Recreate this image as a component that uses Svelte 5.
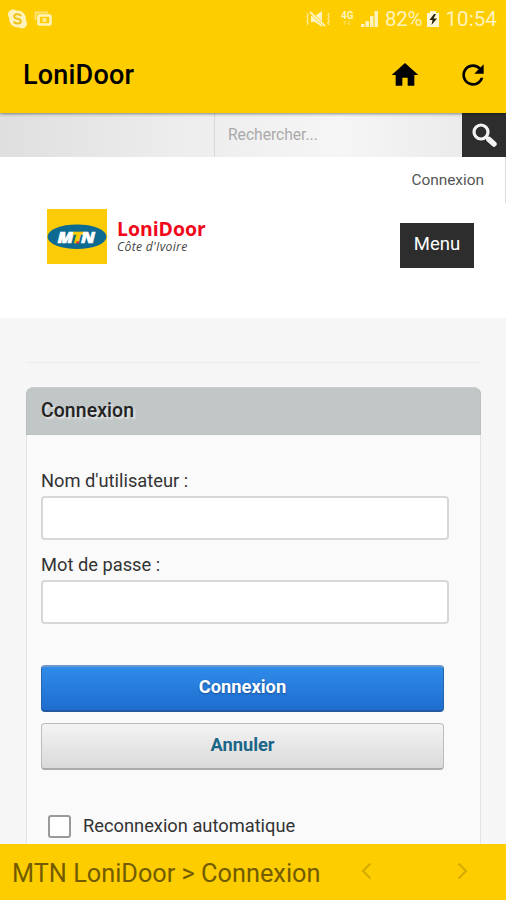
<script>
    let search = '';
    let remember = false;
    const fields = [
        {id:'username', type:'text', label:"Nom d'utilisateur :"},
        {id:'password', type:'password', label:'Mot de passe :'}
    ];
</script>
<style>
    :global(body) {
        margin: 0;
        overflow: hidden;
    }
    .screen {
        display: flex;
        flex-direction: column;
        width: 506px;
        height: 900px;
        overflow: hidden;
        font-family: Roboto, sans-serif;
        background: #f6f6f6;
        color: #333;
    }
    .screen *, .screen {
        box-sizing: border-box;
    }
    svg {
        display: block;
        flex: none;
    }
    button {
        font-family: inherit;
        padding: 0;
        border: 0;
        background: none;
    }

    .top {
        flex: none;
        height: 113px;
        background: #fecd00;
        box-shadow: 0 1px 3px rgba(0,0,0,.45);
        z-index: 1;
    }
    .status {
        display: flex;
        align-items: center;
        height: 37px;
        padding: 0 9px 0 7px;
        color: #fff3bd;
        font-size: 20px;
    }
    .status .copy {
        margin-left: 6px;
    }
    .status .right {
        display: flex;
        align-items: center;
        margin-left: auto;
    }
    .network {
        margin-left: 9px;
    }
    .signal {
        margin-left: 5px;
    }
    .battery {
        margin-left: 5px;
    }
    .percent {
        margin-left: 6px;
        font-size: 20.5px;
        letter-spacing: -.2px;
    }
    .clock {
        margin-left: 6px;
        font-size: 20.5px;
        letter-spacing: .1px;
    }
    .appbar {
        display: flex;
        align-items: center;
        height: 76px;
        padding: 0 17px 0 23px;
        color: #000;
    }
    .appbar h1 {
        margin: 0 auto 0 0;
        font-size: 27px;
        font-weight: 500;
        letter-spacing: .2px;
    }
    .appbar button + button {
        margin-left: 36px;
    }

    .search {
        display: flex;
        flex: none;
        height: 44px;
        background: linear-gradient(90deg, #dfdfdf, #ededed 35%, #f4f4f4 65%, #e8e8e8);
    }
    .search input {
        width: 248px;
        margin-left: auto;
        padding: 0 0 0 13px;
        border: 0;
        border-left: 1px solid #d8d8d8;
        outline: 0;
        background: linear-gradient(90deg, #eee, #f6f6f6 50%, #ebebeb);
        font: 15.6px Roboto, sans-serif;
    }
    .search input::placeholder {
        color: #aaa;
        opacity: 1;
    }
    .search button {
        display: flex;
        align-items: center;
        justify-content: center;
        width: 44px;
        background: #2d2d2d;
    }

    .account {
        flex: none;
        display: flex;
        justify-content: flex-end;
        height: 46px;
        padding: 13px 21px 0 0;
        border-right: 1px solid #ddd;
        background: #fff;
        font-size: 15.4px;
        line-height: 20px;
        color: #555;
    }
    .brand {
        flex: none;
        display: flex;
        align-items: flex-start;
        height: 115px;
        padding: 6px 32px 0 47px;
        background: #fff;
    }
    .name {
        margin: 9px 0 0 10px;
        font-family: "Open Sans", "Noto Sans", sans-serif;
    }
    .name strong {
        display: block;
        font-size: 19.4px;
        line-height: 21px;
        color: #f0081a;
    }
    .name em {
        display: block;
        font-size: 12.2px;
        line-height: 16px;
        letter-spacing: .3px;
        color: #444;
    }
    .menu {
        width: 74px;
        height: 45px;
        margin: 14px 0 0 auto;
        padding-bottom: 4px;
        background: #2d2d2d;
        color: #fff;
        font-size: 18.5px;
    }

    main {
        flex: 1;
        min-height: 0;
        overflow: hidden;
        padding: 44px 25px 0 26px;
    }
    hr {
        height: 1px;
        margin: 0 0 24px;
        border: 0;
        background: #ebebeb;
    }
    .panel {
        height: 520px;
        border: 1px solid #e2e3e3;
        border-radius: 8px;
        background: #fafafa;
    }
    .panel h2 {
        height: 48px;
        margin: -1px -1px 0;
        padding-left: 14px;
        border: 1px solid #bbc0bf;
        border-top-color: #c9cccc;
        border-radius: 7px 7px 0 0;
        background: #c1c6c6;
        color: #222;
        font-size: 19.4px;
        font-weight: 500;
        letter-spacing: .1px;
        line-height: 45px;
        text-shadow: 2px 2px 2px #e8e8e8;
    }
    form {
        padding: 33px 31px 0 14px;
    }
    label {
        display: block;
        margin-bottom: 2px;
        font-size: 18.3px;
        line-height: 26px;
    }
    .field {
        width: 408px;
        height: 44px;
        margin-bottom: 12px;
        padding: 0 10px;
        display: block;
        border: 2px solid #d7d7d7;
        border-radius: 4px;
        background: #fff;
        outline: 0;
        font-size: 18px;
    }
    .actions {
        display: flex;
        flex-direction: column;
        gap: 11px;
        width: 403px;
        margin-top: 41px;
    }
    .actions button {
        height: 47px;
        padding-bottom: 4px;
        border: 1px solid #bcbcbc;
        border-bottom: 2px solid #aaa;
        border-radius: 4px;
        background: linear-gradient(#f3f3f3, #dadada);
        color: #1b6688;
        font-size: 18.3px;
        font-weight: 700;
    }
    .actions .primary {
        border-color: #2567ae;
        border-top: 2px solid #6d98c9;
        border-bottom-color: #2259a0;
        background: linear-gradient(#308be9, #1e6dce);
        color: #fff;
        text-shadow: 0 1px 2px #174f94;
    }
    .remember {
        display: flex;
        align-items: center;
        margin: 43px 0 0 7px;
    }
    .remember input {
        appearance: none;
        width: 23px;
        height: 23px;
        margin: 0 12px 0 0;
        border: 2px solid #9a9a9a;
        border-radius: 3px;
        background: #fff;
    }

    footer {
        flex: none;
        display: flex;
        align-items: center;
        height: 56px;
        padding: 3px 38px 0 12px;
        background: #fecd00;
        color: #735c00;
        font-size: 25.3px;
        white-space: nowrap;
    }
    footer span {
        margin-right: auto;
    }
    footer button {
        margin-top: -6px;
    }
    footer button + button {
        margin-left: 85px;
    }
</style>

<div class="screen">
    <div class="top">
        <div class="status">
            <svg width="21" height="20" viewBox="0 0 21 20" fill="#fff3bd">
                <circle cx="10.500" cy="10" r="8.400" />
                <circle cx="6" cy="5.500" r="5" />
                <circle cx="15" cy="14.500" r="5" />
                <path d="M14 7C13 4.700 7.200 4.500 7.200 7.400c0 3.200 6.700 1.600 6.700 4.800 0 3-5.900 2.900-7.100.3" fill="none" stroke="#f0c218" stroke-width="2" />
            </svg>
            <svg class="copy" width="18" height="15" viewBox="0 0 18 15" fill="none">
                <path d="M1.500 9V1.500H14" stroke="#ffe47a" stroke-width="1.800" />
                <rect x="4.500" y="4.500" width="12" height="9" rx="1" stroke="#fff3bd" stroke-width="2.600" />
                <rect x="8.500" y="7" width="4" height="4" fill="#ffe88e" />
            </svg>
            <div class="right">
                <svg width="26" height="18" viewBox="0 0 26 18" fill="#fff3bd">
                    <path d="M6 6h4l7-5v16l-7-5H6z" />
                    <path d="M5 2l15 14" stroke="#fecd00" stroke-width="3" />
                    <path d="M5 2l15 14" stroke="#fff3bd" stroke-width="1.800" />
                    <path d="M2 3l1 2-1 2 1 2-1 2 1 2-1 2M24 3l-1 2 1 2-1 2 1 2-1 2 1 2" fill="none" stroke="#ffe88e" stroke-width="1.400" />
                </svg>
                <svg class="network" width="15" height="18" viewBox="0 0 15 18" fill="#fff3bd">
                    <text x="1" y="9" font-size="10" font-weight="700">4G</text>
                    <path d="M5 11v4M3.500 13L5 11l1.500 2M9 15v-4M7.500 13L9 15l1.500-2" fill="none" stroke="#ffe06a" stroke-width=".8" />
                </svg>
                <svg class="signal" width="19" height="18" viewBox="0 0 19 18" fill="#fff3bd">
                    <path d="M1 17v-3h3.500v3zM5.500 17v-6H9v6zM10 17V6h3.500v11zM14.500 17V1H18v16z" />
                </svg>
                <span class="percent">82%</span>
                <svg class="battery" width="12" height="18" viewBox="0 0 12 18">
                    <path d="M0 3h3V1h6v2h3v14H0z" fill="#fff7d5" />
                    <path d="M7 4L2.500 10h3L4.500 15 10 8.500H6.500L9 4z" fill="#2b220b" />
                </svg>
                <span class="clock">10:54</span>
            </div>
        </div>
        <div class="appbar">
            <h1>LoniDoor</h1>
            <button aria-label="Accueil">
                <svg width="32" height="32" viewBox="0 0 24 24"><path d="M10 20v-6h4v6h5v-8h3L12 3 2 12h3v8z" /></svg>
            </button>
            <button aria-label="Actualiser">
                <svg width="32" height="32" viewBox="0 0 24 24"><path d="M17.650 6.350C16.200 4.900 14.210 4 12 4c-4.420 0-7.990 3.580-7.990 8s3.570 8 7.990 8c3.730 0 6.840-2.550 7.730-6h-2.080c-.82 2.330-3.040 4-5.650 4-3.310 0-6-2.690-6-6s2.690-6 6-6c1.660 0 3.140.69 4.220 1.780L13 11h7V4z" /></svg>
            </button>
        </div>
    </div>

    <div class="search">
        <input type="text" placeholder="Rechercher..." bind:value={search} />
        <button aria-label="Rechercher">
            <svg width="28" height="26" viewBox="0 0 28 26" fill="none" stroke="#f3f3f3">
                <circle cx="11" cy="10" r="7" stroke-width="3.200" />
                <path d="M16 15l3 2.500" stroke-width="3" />
                <path d="M19 17.500l5 4.500" stroke-width="5.500" stroke-linecap="round" />
            </svg>
        </button>
    </div>
    <div class="account">Connexion</div>
    <div class="brand">
        <svg width="60" height="55" viewBox="0 0 60 55">
            <rect width="60" height="55" fill="#fbcb08" />
            <ellipse cx="30" cy="27.700" rx="29.500" ry="12.300" fill="#0d6a91" />
            <g font-family="Open Sans, sans-serif" font-size="16" font-weight="800" font-style="italic" fill="#fff" stroke="#fff" stroke-width=".6">
                <text x="10.500" y="33.500" textLength="16" lengthAdjust="spacingAndGlyphs">M</text>
                <text x="25" y="33.500" textLength="11" lengthAdjust="spacingAndGlyphs" fill="#fbcb08" stroke="#fbcb08">T</text>
                <text x="34" y="33.500" textLength="14" lengthAdjust="spacingAndGlyphs">N</text>
            </g>
            <path d="M28.500 32.500h4l-2 2.800z" fill="#d7261e" />
        </svg>
        <div class="name">
            <strong>LoniDoor</strong>
            <em>Côte d'Ivoire</em>
        </div>
        <button class="menu">Menu</button>
    </div>

    <main>
        <hr />
        <div class="panel">
            <h2>Connexion</h2>
            <form>
                {#each fields as field}
                <label for={field.id}>{field.label}</label>
                <input class="field" id={field.id} type={field.type} />
                {/each}
                <div class="actions">
                    <button type="button" class="primary">Connexion</button>
                    <button type="button">Annuler</button>
                </div>
                <label class="remember">
                    <input type="checkbox" bind:checked={remember} />
                    Reconnexion automatique
                </label>
            </form>
        </div>
    </main>

    <footer>
        <span>MTN LoniDoor &gt; Connexion</span>
        <button aria-label="Page précédente">
            <svg width="11" height="18" viewBox="0 0 11 18" fill="none" stroke="#d6ac00" stroke-width="2.200"><path d="M9.500 1.500L2 9l7.500 7.500" /></svg>
        </button>
        <button aria-label="Page suivante">
            <svg width="11" height="18" viewBox="0 0 11 18" fill="none" stroke="#d6ac00" stroke-width="2.200"><path d="M1.500 1.500L9 9l-7.500 7.500" /></svg>
        </button>
    </footer>
</div>
